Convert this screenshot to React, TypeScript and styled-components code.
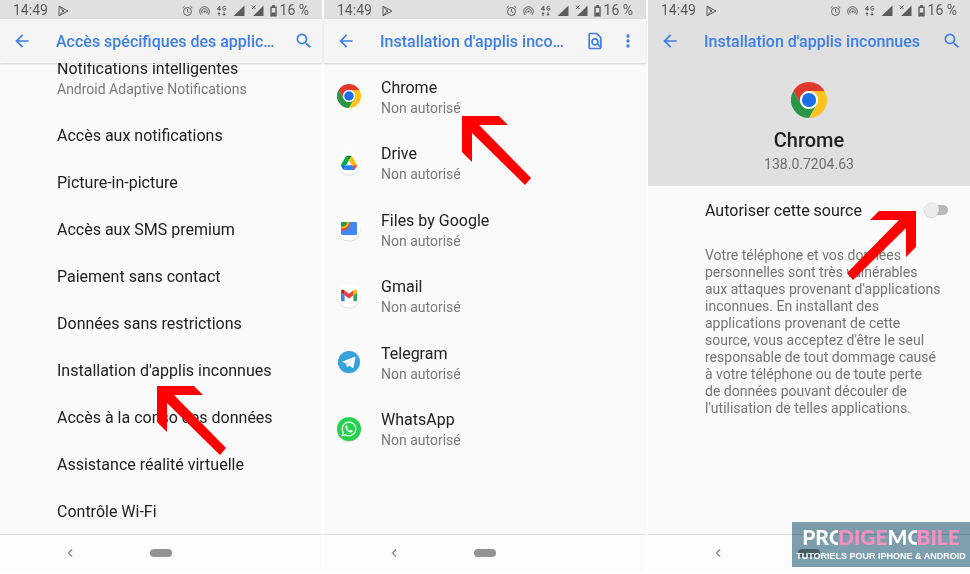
import React from "react";
import styled, { createGlobalStyle, css } from "styled-components";
import { FaWhatsapp } from "react-icons/fa";

const GlobalStyle = createGlobalStyle`
  *, *::before, *::after { box-sizing: border-box; }
  body { margin: 0; background: #fff; font-family: Roboto, "Noto Sans", sans-serif; color: #212121; }
  button, input { font: inherit; color: inherit; }
  h1, h2, p, ul { margin: 0; padding: 0; }
  svg { display: block; flex: none; }
`;

const Page = styled.main`
  position: relative;
  display: grid;
  grid-template-columns: repeat(3, minmax(0, 1fr));
  gap: 2px;
  height: 100vh;
  padding-bottom: 3px;
`;

const Phone = styled.section`
  position: relative;
  display: flex;
  flex-direction: column;
  min-height: 0;
  background: #fafafa;
`;

const StatusBar = styled.div`
  display: flex;
  flex: none;
  align-items: center;
  height: 19px;
  padding: 2px 13px 0;
  background: #e0e0e0;
  color: #5c5c5c;
  font-size: 14px;
  line-height: 17px;
`;

const StatusIcons = styled.div`
  display: flex;
  align-items: center;
  gap: 6px;
  margin-left: auto;
  margin-right: 3px;
`;

const Time = styled.span`
  margin-right: 10px;
`;

const AppBar = styled.header<{ $flat?: boolean }>`
  position: relative;
  display: flex;
  flex: none;
  align-items: center;
  height: 44px;
  padding: 0 8px 0 12px;
  color: #3d7ee8;
  background: #f5f5f5;
  box-shadow: 0 1px 2px rgba(0, 0, 0, 0.16);
  ${(p) =>
    p.$flat &&
    css`
      background: #e0e0e0;
      box-shadow: none;
    `}
`;

const IconButton = styled.button`
  flex: none;
  width: 20px;
  height: 20px;
  padding: 0;
  border: 0;
  background: none;
`;

const Title = styled.h1`
  flex: 1;
  min-width: 0;
  margin-left: 24px;
  padding-top: 2px;
  overflow: hidden;
  font-size: 16px;
  font-weight: 500;
  line-height: 24px;
  white-space: nowrap;
  text-overflow: ellipsis;
`;

const Actions = styled.div`
  display: flex;
  gap: 13px;
  margin-left: 13px;
`;

const SettingsList = styled.ul`
  display: flex;
  flex: 1;
  flex-direction: column;
  justify-content: flex-end;
  min-height: 0;
  overflow: hidden;
  list-style: none;
`;

const SettingRow = styled.button`
  display: block;
  width: 100%;
  min-height: 47px;
  padding: 3px 16px 0 57px;
  border: 0;
  background: none;
  font-size: 16px;
  line-height: 20px;
  text-align: left;
`;

const TallRow = styled(SettingRow)`
  padding-bottom: 12px;
`;

const Secondary = styled.span`
  display: block;
  color: #7a7a7a;
  font-size: 14px;
  line-height: 20px;
`;

const AppList = styled.ul`
  display: flex;
  flex: 1;
  flex-direction: column;
  min-height: 0;
  padding: 0 0 72px;
  list-style: none;
`;

const AppItem = styled.li`
  display: flex;
  flex: 1;
`;

const AppRow = styled.button`
  display: flex;
  flex: 1;
  align-items: center;
  gap: 20px;
  padding: 0 13px;
  border: 0;
  background: none;
  font-size: 16px;
  line-height: 20px;
  text-align: left;
`;

const AppText = styled.span`
  padding-top: 3px;
`;

const Hero = styled.div`
  display: flex;
  flex: none;
  flex-direction: column;
  align-items: center;
  padding: 19px 16px 12px;
  background: #e0e0e0;
`;

const HeroName = styled.h2`
  margin-top: 10px;
  font-size: 20px;
  font-weight: 500;
  line-height: 24px;
`;

const Version = styled.p`
  margin-top: 2px;
  color: #6e6e6e;
  font-size: 14px;
  line-height: 20px;
`;

const Detail = styled.div`
  flex: 1;
  min-height: 0;
`;

const SwitchRow = styled.label`
  display: flex;
  align-items: center;
  justify-content: space-between;
  height: 48px;
  padding: 0 22px 0 57px;
  font-size: 16px;
`;

const Switch = styled.input`
  position: relative;
  appearance: none;
  width: 24px;
  height: 10px;
  margin: 0;
  border-radius: 5px;
  background: #b9b9b9;
  &::before {
    content: "";
    position: absolute;
    top: -3px;
    left: 0;
    width: 15px;
    height: 15px;
    border-radius: 50%;
    background: #ececec;
    box-shadow: 0 1px 1px rgba(0, 0, 0, 0.15);
  }
  &:checked::before {
    left: 9px;
    background: #3d7ee8;
  }
`;

const Description = styled.p`
  padding: 13px 22px 0 57px;
  color: #757575;
  font-size: 14px;
  line-height: 17px;
`;

const NavBar = styled.nav`
  display: grid;
  flex: none;
  grid-template-columns: 1fr 22px 1fr;
  align-items: center;
  height: 37px;
  border-top: 1px solid #dcdcdc;
  background: #fcfcfc;
`;

const NavBack = styled.button`
  justify-self: center;
  width: 12px;
  height: 12px;
  margin-right: 10px;
  padding: 0;
  border: 0;
  background: none;
  color: #8a8a8a;
`;

const NavHome = styled.button`
  height: 8px;
  padding: 0;
  border: 0;
  border-radius: 4px;
  background: #929292;
`;

const Arrow = styled.svg<{ $left: number; $top: number; $flip?: boolean }>`
  position: absolute;
  left: ${(p) => p.$left}px;
  top: ${(p) => p.$top}px;
  width: 69px;
  height: 69px;
  pointer-events: none;
  transform: ${(p) => (p.$flip ? "scaleX(-1)" : "none")};
`;

const Watermark = styled.aside`
  position: absolute;
  right: 0;
  bottom: 7px;
  display: flex;
  flex-direction: column;
  align-items: center;
  width: 178px;
  height: 45px;
  padding-top: 3px;
  color: #fff;
  &::before {
    content: "";
    position: absolute;
    inset: 0;
    background: #7da0af;
    mix-blend-mode: multiply;
  }
`;

const Brand = styled.div`
  position: relative;
  display: flex;
  font-family: Lato, sans-serif;
  font-size: 21px;
  font-weight: 900;
  line-height: 24px;
`;

const Pink = styled.span`
  color: #f78fc3;
`;

const HalfLetter = styled.span`
  width: 9px;
  overflow: hidden;
`;

const Tagline = styled.div`
  position: relative;
  font-family: "Liberation Sans", Arial, sans-serif;
  font-size: 9px;
  font-weight: 700;
  line-height: 14px;
  white-space: nowrap;
`;

const ChromeLogo = ({ size }: { size: number }) => (
  <svg width={size} height={size} viewBox="0 0 48 48" aria-hidden="true">
    <path fill="#2a9747" d="M13.6 30 3.2 12A24 24 0 0 0 24 48l10.4-18A12 12 0 0 1 13.6 30Z" />
    <path fill="#fcc31c" d="M24 12h20.8A24 24 0 0 1 24 48l10.4-18A12 12 0 0 0 24 12Z" />
    <path fill="#e03a2e" d="M3.2 12a24 24 0 0 1 41.6 0H24a12 12 0 0 0-10.4 18Z" />
    <circle cx="24" cy="24" r="12" fill="#fff" />
    <circle cx="24" cy="24" r="9.5" fill="#1b6fe8" />
  </svg>
);

const Disc = ({ children, fill = "#fff", r = 11.5 }: { children: React.ReactNode; fill?: string; r?: number }) => (
  <svg width="24" height="26" viewBox="0 0 24 26" aria-hidden="true">
    <circle cx="12" cy="14" r={r} fill="#000" opacity="0.12" />
    <circle cx="12" cy="13" r={r} fill={fill} />
    {children}
  </svg>
);

const DriveLogo = () => (
  <Disc>
    <svg x="4" y="5.5" width="16" height="14.5" viewBox="0 0 87.3 78">
      <path fill="#0066da" d="m6.6 66.85 3.85 6.65c.8 1.4 1.95 2.5 3.3 3.3L27.5 53H0c0 1.55.4 3.1 1.2 4.5z" />
      <path fill="#00ac47" d="M43.65 25 29.9 1.2c-1.35.8-2.5 1.9-3.3 3.3l-25.4 44A9.06 9.06 0 0 0 0 53h27.5z" />
      <path fill="#ea4335" d="M73.55 76.8c1.35-.8 2.5-1.9 3.3-3.3l1.6-2.75 7.65-13.25c.8-1.4 1.2-2.95 1.2-4.5H59.8l5.85 11.5z" />
      <path fill="#00832d" d="M43.65 25 57.4 1.2C56.05.4 54.5 0 52.9 0H34.4c-1.6 0-3.15.45-4.5 1.2z" />
      <path fill="#2684fc" d="M59.8 53H27.5L13.75 76.8c1.35.8 2.9 1.2 4.5 1.2h50.8c1.6 0 3.15-.45 4.5-1.2z" />
      <path fill="#ffba00" d="m73.4 26.5-12.7-22c-.8-1.4-1.95-2.5-3.3-3.3L43.65 25 59.8 53h27.45c0-1.55-.4-3.1-1.2-4.5z" />
    </svg>
  </Disc>
);

const FilesLogo = () => (
  <Disc>
    <path fill="#4387f5" d="M4 7.2C4 6.5 4.5 6 5.2 6h13.600c.7 0 1.200.5 1.200 1.200v10.600c0 .7-.5 1.200-1.200 1.200H5.200c-.7 0-1.200-.5-1.200-1.200Z" />
    <path fill="#e94335" d="M4 7h8.500v1A6.500 6.500 0 0 1 6 14.500H4Z" />
    <path fill="#fbbc05" d="M4 6h8v.5A6 6 0 0 1 6 12.500H4Z" />
    <path fill="#1a9a52" d="M5.200 6H10a5 5 0 0 1-5 4.500H4V7.200C4 6.500 4.500 6 5.200 6Z" />
  </Disc>
);

const GmailLogo = () => (
  <Disc>
    <svg x="4" y="6.500" width="16" height="12" viewBox="52 42 88 66">
      <path fill="#4285f4" d="M58 108h14V74L52 59v43c0 3.320 2.690 6 6 6" />
      <path fill="#34a853" d="M120 108h14c3.320 0 6-2.690 6-6V59l-20 15" />
      <path fill="#fbbc04" d="M120 48v26l20-15v-8c0-7.420-8.470-11.650-14.400-7.200" />
      <path fill="#ea4335" d="M72 74V48l24 18 24-18v26L96 92" />
      <path fill="#c5221f" d="M52 51v8l20 15V48l-5.600-4.200c-5.940-4.450-14.400-.22-14.400 7.200" />
    </svg>
  </Disc>
);

const TelegramLogo = () => (
  <Disc fill="#35a2dc" r={11}>
    <path fill="#fff" d="M5 12.700 17.600 7.800c.6-.2 1 .1.900.8l-2 9.700c-.1.600-.6.800-1.100.4l-3.200-2.300-1.600 1.500c-.4.400-.8.200-.9-.3l-.9-3.400-3.700-1.200c-.5-.2-.5-.4-.1-.600Z" />
    <path fill="#b9dcf0" d="m9 14.200 6.800-4.400-5.300 5-.4 3Z" />
  </Disc>
);

const WhatsAppLogo = () => (
  <Disc fill="#25d34f" r={12}>
    <FaWhatsapp x="3.500" y="4.500" size={17} color="#fff" />
  </Disc>
);

const BackIcon = () => (
  <svg width="20" height="20" viewBox="0 0 24 24" fill="currentColor" aria-hidden="true">
    <path d="M20 11H7.830l5.590-5.590L12 4l-8 8 8 8 1.410-1.410L7.830 13H20v-2Z" />
  </svg>
);

const SearchIcon = () => (
  <svg width="20" height="20" viewBox="0 0 24 24" fill="currentColor" aria-hidden="true">
    <path d="M15.500 14h-.79l-.28-.27A6.471 6.471 0 0 0 16 9.500 6.500 6.500 0 1 0 9.500 16c1.610 0 3.090-.59 4.230-1.570l.27.28v.79l5 4.990L20.490 19l-4.990-5Zm-6 0C7.010 14 5 11.990 5 9.500S7.010 5 9.500 5 14 7.010 14 9.500 11.990 14 9.500 14Z" />
  </svg>
);

const FindInPageIcon = () => (
  <svg width="20" height="20" viewBox="0 0 24 24" fill="none" stroke="currentColor" strokeWidth="2" aria-hidden="true">
    <path d="M19 19.500V8l-5-5H6a1 1 0 0 0-1 1v16a1 1 0 0 0 1 1h12l1-1.500-4.200-4.200" />
    <circle cx="12" cy="13" r="3.600" />
  </svg>
);

const MoreIcon = () => (
  <svg width="20" height="20" viewBox="0 0 24 24" fill="currentColor" aria-hidden="true">
    <circle cx="12" cy="6" r="2" />
    <circle cx="12" cy="12" r="2" />
    <circle cx="12" cy="18" r="2" />
  </svg>
);

const PlayIcon = () => (
  <svg width="11" height="12" viewBox="0 0 11 12" fill="none" stroke="currentColor" strokeLinejoin="round" aria-hidden="true">
    <path d="M1 1.200 10 6l-9 4.800ZM1.500 1.500l5 6.300M1.500 10.500l5-6.300" />
  </svg>
);

const Status = () => (
  <StatusBar>
    <Time>14:49</Time>
    <PlayIcon />
    <StatusIcons>
      <svg width="11" height="12" viewBox="0 0 11 12" fill="none" stroke="currentColor" aria-hidden="true">
        <circle cx="5.500" cy="6.500" r="4" />
        <path d="M5.500 4v2.700l1.800 1M.7 2.800l2-1.700M10.300 2.800l-2-1.700" />
      </svg>
      <svg width="11" height="12" viewBox="0 0 11 12" fill="none" stroke="currentColor" aria-hidden="true">
        <path d="M2 9.800a4.800 4.800 0 1 1 7 0M3.400 8.300a2.800 2.800 0 1 1 4.200 0" />
        <circle cx="5.500" cy="6.500" r="1.100" fill="currentColor" stroke="none" />
      </svg>
      <svg width="11" height="12" viewBox="0 0 11 12" fill="none" stroke="currentColor" aria-hidden="true">
        <path d="M3.700 5.800V1L1.200 4.300h3.600M9.700 1.800c-.6-.9-2.900-.8-2.900 1.500s2.300 2.500 3 1.400V3.500H8.400" />
        <path fill="currentColor" stroke="none" d="m3 7 1.700 2H3.500v2h-1V9H1.300ZM8 11 6.300 9h1.200V7h1v2h1.200Z" />
      </svg>
      <svg width="12" height="12" viewBox="0 0 12 12" fill="currentColor" aria-hidden="true">
        <path d="M11.500.5v10.500H.5Z" />
      </svg>
      <svg width="13" height="12" viewBox="0 0 13 12" fill="currentColor" aria-hidden="true">
        <path d="M12.500 .5v10.500H2L6 7.200Z" />
        <path fill="none" stroke="currentColor" d="m1 .5 3.500 3.500M4.500.5 1 4" />
      </svg>
      <svg width="7" height="12" viewBox="0 0 7 12" fill="none" stroke="currentColor" aria-hidden="true">
        <path fill="currentColor" d="M2.500.5h2v1h-2Z" />
        <path strokeWidth="1.400" d="M1 2.200h5v8.600H1Z" />
        <path fill="currentColor" d="M2 8h3v2H2Z" />
      </svg>
    </StatusIcons>
    <span>16 %</span>
  </StatusBar>
);

const BottomNav = () => (
  <NavBar aria-label="Navigation">
    <NavBack aria-label="Retour">
      <svg width="12" height="12" viewBox="0 0 12 12" fill="none" stroke="currentColor" strokeWidth="1.300" aria-hidden="true">
        <path d="M8 2.500 4.500 6 8 9.500" />
      </svg>
    </NavBack>
    <NavHome aria-label="Accueil" />
  </NavBar>
);

const RedArrow = (props: { $left: number; $top: number; $flip?: boolean }) => (
  <Arrow viewBox="0 0 69 69" aria-hidden="true" {...props}>
    <path fill="#fe0000" d="M0 0h37l9 9H17l52 53-6 7L10 17v29L0 36Z" />
  </Arrow>
);

const settings = [
  "Accès aux notifications",
  "Picture-in-picture",
  "Accès aux SMS premium",
  "Paiement sans contact",
  "Données sans restrictions",
  "Installation d'applis inconnues",
  "Accès à la conso des données",
  "Assistance réalité virtuelle",
  "Contrôle Wi-Fi",
];

const apps = [
  { name: "Chrome", icon: <ChromeLogo size={24} /> },
  { name: "Drive", icon: <DriveLogo /> },
  { name: "Files by Google", icon: <FilesLogo /> },
  { name: "Gmail", icon: <GmailLogo /> },
  { name: "Telegram", icon: <TelegramLogo /> },
  { name: "WhatsApp", icon: <WhatsAppLogo /> },
];

const Bar = ({ title, flat, children }: { title: string; flat?: boolean; children: React.ReactNode }) => (
  <AppBar $flat={flat}>
    <IconButton aria-label="Retour">
      <BackIcon />
    </IconButton>
    <Title>{title}</Title>
    <Actions>{children}</Actions>
  </AppBar>
);

export default function App() {
  return (
    <>
      <GlobalStyle />
      <Page>
        <Phone>
          <Status />
          <Bar title="Accès spécifiques des applications">
            <IconButton aria-label="Rechercher">
              <SearchIcon />
            </IconButton>
          </Bar>
          <SettingsList>
            <li>
              <TallRow>
                Notifications intelligentes
                <Secondary>Android Adaptive Notifications</Secondary>
              </TallRow>
            </li>
            {settings.map((name) => (
              <li key={name}>
                <SettingRow>{name}</SettingRow>
              </li>
            ))}
          </SettingsList>
          <BottomNav />
          <RedArrow $left={157} $top={386} />
        </Phone>

        <Phone>
          <Status />
          <Bar title="Installation d'applis inconnues">
            <IconButton aria-label="Rechercher dans la page">
              <FindInPageIcon />
            </IconButton>
            <IconButton aria-label="Plus d'options">
              <MoreIcon />
            </IconButton>
          </Bar>
          <AppList>
            {apps.map((app) => (
              <AppItem key={app.name}>
                <AppRow>
                  {app.icon}
                  <AppText>
                    {app.name}
                    <Secondary>Non autorisé</Secondary>
                  </AppText>
                </AppRow>
              </AppItem>
            ))}
          </AppList>
          <BottomNav />
          <RedArrow $left={138} $top={116} />
        </Phone>

        <Phone>
          <Status />
          <Bar title="Installation d'applis inconnues" flat>
            <IconButton aria-label="Rechercher">
              <SearchIcon />
            </IconButton>
          </Bar>
          <Hero>
            <ChromeLogo size={36} />
            <HeroName>Chrome</HeroName>
            <Version>138.0.7204.63</Version>
          </Hero>
          <Detail>
            <SwitchRow>
              Autoriser cette source
              <Switch type="checkbox" role="switch" />
            </SwitchRow>
            <Description>
              Votre téléphone et vos données personnelles sont très vulnérables
              <br />
              aux attaques provenant d'applications inconnues. En installant des applications provenant de
              cette source, vous acceptez d'être le seul responsable de tout dommage causé
              <br />
              à votre téléphone ou de toute perte
              <br />
              de données pouvant découler de l'utilisation de telles applications.
            </Description>
          </Detail>
          <BottomNav />
          <RedArrow $left={199} $top={211} $flip />
        </Phone>

        <Watermark>
          <Brand>
            <span>PR</span>
            <HalfLetter>O</HalfLetter>
            <Pink>DIGE</Pink>
            <span>M</span>
            <HalfLetter>O</HalfLetter>
            <Pink>BILE</Pink>
          </Brand>
          <Tagline>TUTORIELS POUR IPHONE &amp; ANDROID</Tagline>
        </Watermark>
      </Page>
    </>
  );
}
